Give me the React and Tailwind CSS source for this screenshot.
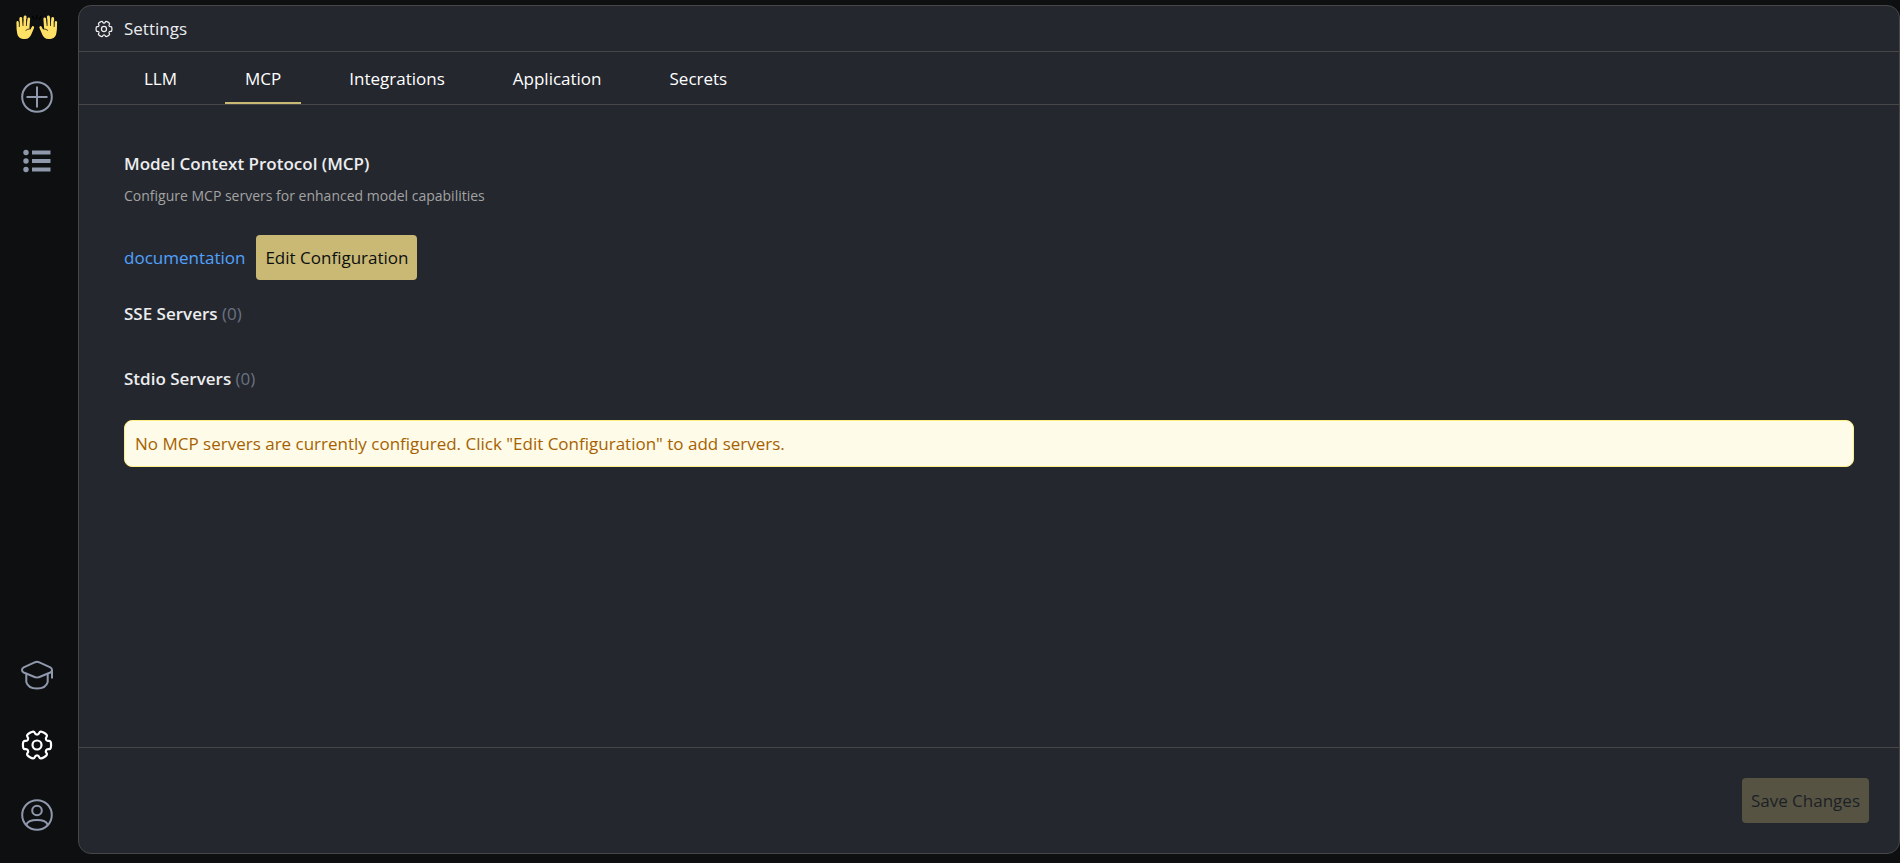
const TABS = ['LLM', 'MCP', 'Integrations', 'Application', 'Secrets'];

// six-toothed gear outline, corners smoothed through the segment midpoints
function gearPath(cx, cy) {
  const pts = [];
  for (let t = 0; t < 360; t += 60) {
    [[-21, 10.6], [-18, 14.8], [18, 14.8], [21, 10.6]].forEach(([off, r]) => {
      const a = ((t + off) * Math.PI) / 180;
      pts.push([cx + r * Math.cos(a), cy + r * Math.sin(a)]);
    });
  }
  const mid = (a, b) => `${((a[0] + b[0]) / 2).toFixed(2)} ${((a[1] + b[1]) / 2).toFixed(2)}`;
  const last = pts[pts.length - 1];
  let d = `M${mid(last, pts[0])}`;
  pts.forEach((p, i) => {
    d += `Q${p[0].toFixed(2)} ${p[1].toFixed(2)} ${mid(p, pts[(i + 1) % pts.length])}`;
  });
  return `${d}Z`;
}

function GearIcon({ size }) {
  return (
    <svg width={size} height={size} viewBox="0 0 32 32" fill="none" stroke="currentColor" strokeWidth="2.2">
      <path d={gearPath(16, 16)} strokeLinejoin="round" />
      <circle cx="16" cy="16" r="4.5" />
    </svg>
  );
}

function Hand() {
  return (
    <g>
      <path
        d="M.6 14.5L.4 7.2Q.5 6 1.6 6T2.9 7.2L3.3 11 3.4 3.2Q3.6 2 4.8 2T6.2 3.2L6.8 10 7.7 1.4Q8 .3 9.2 .4T10.5 1.600L10.3 10.2 11.5 3.4Q12 2.2 13.1 2.5T14.1 4L13.4 13.5Q13.600 15.2 14.6 14.3L15.7 11.9Q16.5 10.7 17.5 11.3T18 12.9L15.7 18.5C14.5 22 12.5 24 8.8 24 4.5 24 1.8 22.2 1.2 18.5Z"
        fill="#FFE165"
      />
      <path d="M3.3 6v6M7 4v7M10.700 4l-.3 7M9.600 15.500q2-1.500 3.800-1.500" stroke="#0D0F11" strokeWidth="0.8" />
    </g>
  );
}

function Logo() {
  return (
    <svg width="42" height="26" viewBox="0 0 42 26" fill="none">
      <Hand />
      <g transform="translate(41.5 0) scale(-1 1)">
        <Hand />
      </g>
      <path d="M16.5 1.5l1.6 2.6M20.700 0v3.8M25 1.5l-1.6 2.6" stroke="#000" strokeWidth="1.2" strokeLinecap="round" />
    </svg>
  );
}

function PlusIcon() {
  return (
    <svg width="32" height="32" viewBox="0 0 32 32" fill="none" stroke="currentColor" strokeWidth="2">
      <circle cx="16" cy="16" r="14.8" />
      <path d="M16 5.5v21M5.5 16h21" />
    </svg>
  );
}

function ListIcon() {
  return (
    <svg width="32" height="32" viewBox="0 0 32 32" fill="currentColor">
      {[7.5, 16, 24.5].map((y) => (
        <g key={y}>
          <circle cx="5" cy={y} r="2.7" />
          <rect x="11" y={y - 2} width="18.5" height="4" />
        </g>
      ))}
    </svg>
  );
}

function CapIcon() {
  return (
    <svg width="32" height="32" viewBox="0 0 32 32" fill="none" stroke="currentColor" strokeWidth="2" strokeLinejoin="round">
      <path d="M14.2 3.2Q16 2.5 17.8 3.2L29.3 8.3Q31 9.3 31 11Q31 12.7 29.3 13.5L17.8 18.2Q16 19 14.2 18.2L2.7 13.5Q1 12.7 1 11Q1 9.3 2.7 8.3Z" />
      <path d="M31 11v8.5M5.3 14.8v8.2Q7 29.5 16 29.5T26.7 23v-8.2" />
    </svg>
  );
}

function UserIcon() {
  return (
    <svg width="32" height="32" viewBox="0 0 32 32" fill="none" stroke="currentColor" strokeWidth="2">
      <circle cx="16" cy="16" r="14.8" />
      <circle cx="16" cy="11.5" r="4.8" />
      <path d="M5.3 25.8Q7 21 16 21T26.7 25.8" />
    </svg>
  );
}

function Sidebar() {
  return (
    <aside className="flex w-[74px] shrink-0 flex-col items-center justify-between pt-[15px] pb-8 text-[#9099AC]">
      <nav className="flex flex-col items-center">
        <a href="#home" aria-label="Home">
          <Logo />
        </a>
        <button type="button" aria-label="New conversation" className="mt-10">
          <PlusIcon />
        </button>
        <button type="button" aria-label="Conversations" className="mt-8">
          <ListIcon />
        </button>
      </nav>
      <nav className="flex flex-col items-center gap-[38px]">
        <a href="#docs" aria-label="Documentation">
          <CapIcon />
        </a>
        <button type="button" aria-label="Settings" className="text-white">
          <GearIcon size={32} />
        </button>
        <button type="button" aria-label="Account">
          <UserIcon />
        </button>
      </nav>
    </aside>
  );
}

function ServerHeading({ label, count }) {
  return (
    <h3 className="text-[17px] leading-6 font-semibold">
      {label} <span className="font-normal text-gray-500">({count})</span>
    </h3>
  );
}

export default function App() {
  return (
    <div className="flex h-screen bg-[#0D0F11] font-['Open_Sans','Noto_Sans',sans-serif] text-[#ECEDEE]">
      <Sidebar />
      <main className="mt-[5px] mb-[9px] ml-1 flex min-w-0 flex-1 flex-col rounded-[13px] border border-[#474747] bg-[#24272E]">
        <header className="flex h-[46px] items-center gap-[11px] border-b border-[#474747] px-4">
          <GearIcon size={18} />
          <h1 className="pt-px text-[17px] leading-6">Settings</h1>
        </header>

        <nav className="flex h-[53px] gap-7 border-b border-[#474747] px-[45px] text-[17px] text-white">
          {TABS.map((tab) => (
            <a
              key={tab}
              href={`#${tab.toLowerCase()}`}
              className={`flex items-center border-b-2 px-5 pt-[3px] ${tab === 'MCP' ? 'border-[#C9B974]' : 'border-transparent'}`}
            >
              {tab}
            </a>
          ))}
        </nav>

        <section className="flex-1 overflow-auto px-[45px] pt-[47px]">
          <h2 className="text-[17px] leading-6 font-semibold">Model Context Protocol (MCP)</h2>
          <p className="mt-2 text-[14px] leading-6 text-[#A3A3A3]">Configure MCP servers for enhanced model capabilities</p>

          <div className="mt-[27px] flex items-center gap-[11px] text-[17px]">
            <a href="#documentation" className="text-blue-400 hover:underline">
              documentation
            </a>
            <button type="button" className="h-[45px] rounded bg-[#C9B974] px-[9px] text-[#0D0F11]">
              Edit Configuration
            </button>
          </div>

          <div className="mt-[22px] flex flex-col gap-[41px]">
            <ServerHeading label="SSE Servers" count={0} />
            <ServerHeading label="Stdio Servers" count={0} />
          </div>

          <p className="mt-[29px] rounded-lg border border-yellow-200 bg-yellow-50 px-[10px] py-[10px] text-[17px] leading-[25px] text-yellow-700">
            No MCP servers are currently configured. Click "Edit Configuration" to add servers.
          </p>
        </section>

        <footer className="flex justify-end border-t border-[#474747] p-[30px]">
          <button type="button" disabled className="h-[45px] rounded bg-[#C9B974] px-[9px] text-[17px] text-[#0D0F11] opacity-30">
            Save Changes
          </button>
        </footer>
      </main>
    </div>
  );
}
